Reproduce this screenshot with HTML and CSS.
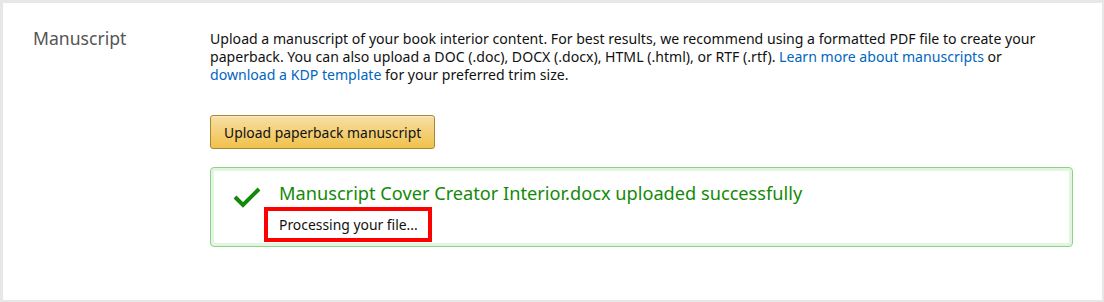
FILE: index.html
```html
<!DOCTYPE html>
<html lang="en">
<head>
    <meta charset="UTF-8">
    <title>Manuscript</title>
    <link rel="stylesheet" href="styles.css">
</head>
<body>
    <div class="section">
        <div class="label">Manuscript</div>

        <div class="content">
            <p class="intro">
                Upload a manuscript of your book interior content. For best results, we recommend using a formatted PDF file to create your
                paperback. You can also upload a DOC (.doc), DOCX (.docx), HTML (.html), or RTF (.rtf). <a href="#">Learn more about manuscripts</a> or
                <a href="#">download a KDP template</a> for your preferred trim size.
            </p>

            <button class="btn-upload" type="button">Upload paperback manuscript</button>

            <div class="alert-success">
                <svg class="check" width="28" height="22" viewBox="0 0 28 22">
                    <path d="M2 11 L10 19 L26 3" fill="none" stroke="#138a07" stroke-width="4"/>
                </svg>
                <div class="alert-body">
                    <div class="alert-title">Manuscript Cover Creator Interior.docx uploaded successfully</div>
                    <div class="alert-note">Processing your file...</div>
                </div>
            </div>
        </div>
    </div>
</body>
</html>
```

FILE: styles.css
```css
html, body {
    margin: 0;
    padding: 0;
    height: 100%;
}

body {
    font-family: "Noto Sans", "Open Sans", sans-serif;
    color: #111;
    background: #fff;
}

.section {
    box-sizing: border-box;
    height: 302px;
    border-style: solid;
    border-color: #e7e7e7;
    border-width: 3px 2px 2px 3px;
    display: flex;
    padding: 23px 0 0 30px;
}

.label {
    width: 177px;
    flex-shrink: 0;
    font-size: 17.6px;
    color: #555;
    line-height: 24px;
}

.content {
    width: 863px;
    padding-top: 4px;
}

.intro {
    margin: 0;
    font-size: 14.1px;
    line-height: 18px;
    width: 840px;
}

.intro a {
    color: #0066c0;
    text-decoration: none;
}

.btn-upload {
    display: block;
    margin-top: 31px;
    height: 34px;
    padding: 0 13px;
    font-family: inherit;
    font-size: 13.9px;
    color: #111;
    border: 1px solid #a88734;
    border-radius: 3px;
    background: linear-gradient(to bottom, #f7dfa5, #f0c14b);
    box-shadow: inset 0 1px 0 rgba(255, 255, 255, 0.4);
}

.alert-success {
    margin-top: 18px;
    height: 80px;
    box-sizing: border-box;
    border: 1px solid #8fd08a;
    border-radius: 4px;
    box-shadow: inset 0 0 0 3px #e2f5df;
    display: flex;
    padding: 14px 0 0 22px;
}

.check {
    flex-shrink: 0;
    margin-top: 4px;
}

.alert-body {
    margin-left: 18px;
}

.alert-title {
    font-size: 18.2px;
    line-height: 22px;
    color: #138a07;
}

.alert-note {
    display: inline-block;
    margin: 3px 0 0 -15px;
    padding: 5px 10px 4px 11px;
    border: 4px solid #f00;
    font-size: 13.9px;
    line-height: 18px;
}
```
